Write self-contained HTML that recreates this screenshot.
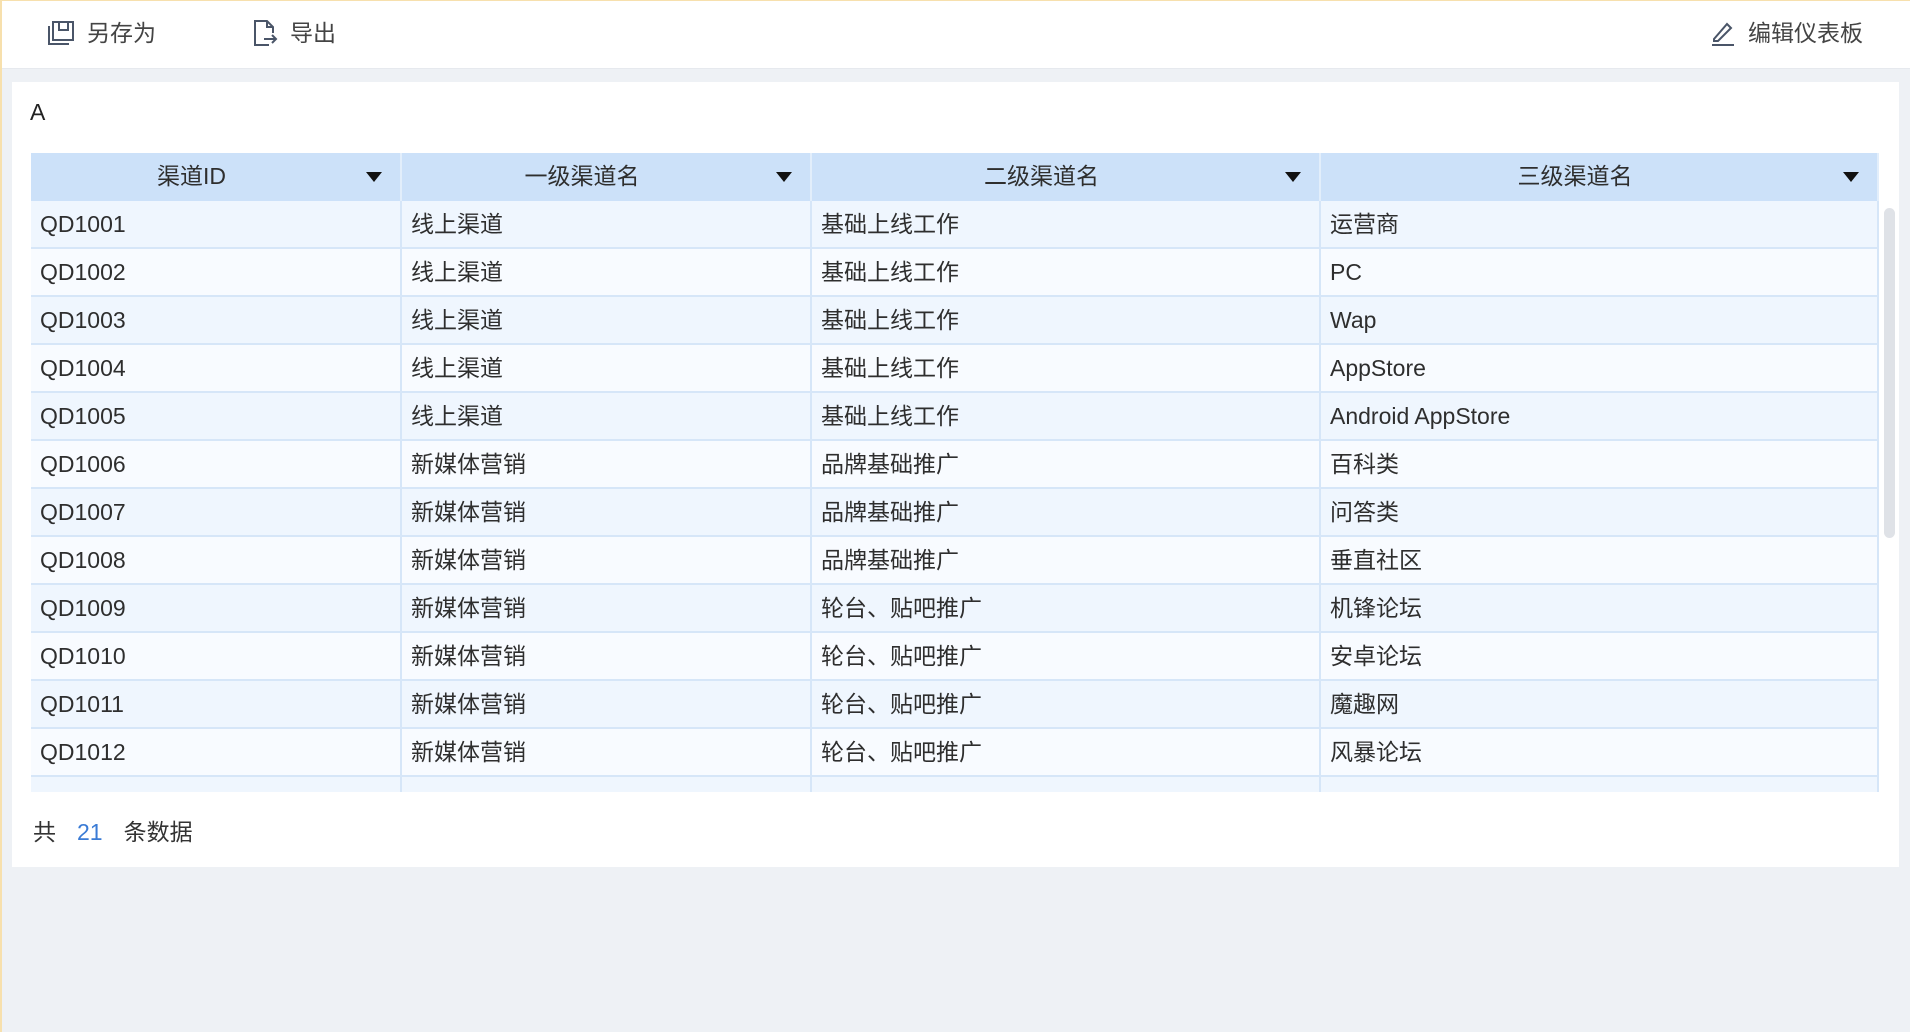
<!DOCTYPE html>
<html><head><meta charset="utf-8">
<style>
*{margin:0;padding:0;box-sizing:border-box}
body{width:1910px;height:1032px;background:#eef1f5;font-family:"Liberation Sans","Noto Sans CJK SC",sans-serif;color:#333;position:relative;overflow:hidden}
.edge{position:absolute;left:0;top:0;width:2px;height:1032px;background:#f7e0ad;z-index:5}
.edget{position:absolute;left:0;top:0;width:1910px;height:1px;background:#f7e0ad;z-index:5}
.top{position:absolute;left:0;top:0;width:1910px;height:69px;background:#fff;border-bottom:1px solid #e6e9ee}
.btn{position:absolute;top:18px;font-size:23px;color:#444;display:flex;align-items:center;gap:12px;line-height:30px}
.panel{position:absolute;left:12px;top:82px;width:1887px;height:785px;background:#fff}
.title{position:absolute;left:18px;top:17px;font-size:23px;color:#222}
.tbl{position:absolute;left:19px;top:71px;width:1848px;height:639px;overflow:hidden}
.row{position:absolute;left:0;width:1848px;height:48px;border-bottom:2px solid #d6e6f8;display:flex}
.row div{height:100%;border-right:2px solid #d6e6f8;font-size:23px;line-height:47px;padding-left:9px;white-space:nowrap;color:#2e2e2e}
.hd{background:#cce1f9;top:0;border-bottom:none}
.hd div{text-align:center;padding-left:0;padding-right:48px;position:relative;border-right:2px solid #e2eefb}
.hd div::after{content:"";position:absolute;right:18px;top:19px;border-left:8px solid transparent;border-right:8px solid transparent;border-top:10px solid #111}
.c1{width:371px}.c2{width:410px}.c3{width:509px}.c4{width:558px}
.odd{background:#eff6fe}.even{background:#f8fbff}
.foot{position:absolute;left:21px;top:731px;font-size:23px;color:#333}
.foot b{font-weight:normal;color:#3a7bd5;margin:0 21px}
.sb{position:absolute;left:1884px;top:208px;width:11px;height:330px;background:#dfe2e7;border-radius:6px}
</style></head><body>
<div class="edge"></div><div class="edget"></div>
<div class="top">
 <div class="btn" style="left:47px"><svg width="28" height="26" viewBox="0 0 28 26" fill="none" stroke="#4a5568" stroke-width="2"><path d="M2 6v18h20"/><path d="M6 2h20v18H6z"/><path d="M12 2v8h9V2"/></svg><span>另存为</span></div>
 <div class="btn" style="left:252px"><svg width="26" height="28" viewBox="0 0 26 28" fill="none" stroke="#4a5568" stroke-width="2"><path d="M17 26H3V2h12l6 6v6"/><path d="M15 2v6h6"/><path d="M12 20h12M20 16l4 4-4 4"/></svg><span>导出</span></div>
 <div class="btn" style="left:1710px"><svg width="26" height="26" viewBox="0 0 26 26" fill="none" stroke="#4a5568" stroke-width="2"><path d="M4 19L17 4l4 4L8 21H4z"/><path d="M2 25h22"/></svg><span>编辑仪表板</span></div>
</div>
<div class="panel">
 <div class="title">A</div>
 <div class="tbl">
  <div class="row hd" style="top:0;height:48px"><div class="c1">渠道ID</div><div class="c2">一级渠道名</div><div class="c3">二级渠道名</div><div class="c4">三级渠道名</div></div>
  <div class="row odd" style="top:48px"><div class="c1">QD1001</div><div class="c2">线上渠道</div><div class="c3">基础上线工作</div><div class="c4">运营商</div></div>
  <div class="row even" style="top:96px"><div class="c1">QD1002</div><div class="c2">线上渠道</div><div class="c3">基础上线工作</div><div class="c4">PC</div></div>
  <div class="row odd" style="top:144px"><div class="c1">QD1003</div><div class="c2">线上渠道</div><div class="c3">基础上线工作</div><div class="c4">Wap</div></div>
  <div class="row even" style="top:192px"><div class="c1">QD1004</div><div class="c2">线上渠道</div><div class="c3">基础上线工作</div><div class="c4">AppStore</div></div>
  <div class="row odd" style="top:240px"><div class="c1">QD1005</div><div class="c2">线上渠道</div><div class="c3">基础上线工作</div><div class="c4">Android AppStore</div></div>
  <div class="row even" style="top:288px"><div class="c1">QD1006</div><div class="c2">新媒体营销</div><div class="c3">品牌基础推广</div><div class="c4">百科类</div></div>
  <div class="row odd" style="top:336px"><div class="c1">QD1007</div><div class="c2">新媒体营销</div><div class="c3">品牌基础推广</div><div class="c4">问答类</div></div>
  <div class="row even" style="top:384px"><div class="c1">QD1008</div><div class="c2">新媒体营销</div><div class="c3">品牌基础推广</div><div class="c4">垂直社区</div></div>
  <div class="row odd" style="top:432px"><div class="c1">QD1009</div><div class="c2">新媒体营销</div><div class="c3">轮台、贴吧推广</div><div class="c4">机锋论坛</div></div>
  <div class="row even" style="top:480px"><div class="c1">QD1010</div><div class="c2">新媒体营销</div><div class="c3">轮台、贴吧推广</div><div class="c4">安卓论坛</div></div>
  <div class="row odd" style="top:528px"><div class="c1">QD1011</div><div class="c2">新媒体营销</div><div class="c3">轮台、贴吧推广</div><div class="c4">魔趣网</div></div>
  <div class="row even" style="top:576px"><div class="c1">QD1012</div><div class="c2">新媒体营销</div><div class="c3">轮台、贴吧推广</div><div class="c4">风暴论坛</div></div>
  <div class="row odd" style="top:624px"><div class="c1"></div><div class="c2"></div><div class="c3"></div><div class="c4"></div></div>
 </div>
 <div class="foot">共<b>21</b>条数据</div>
</div>
<div class="sb"></div>
</body></html>
